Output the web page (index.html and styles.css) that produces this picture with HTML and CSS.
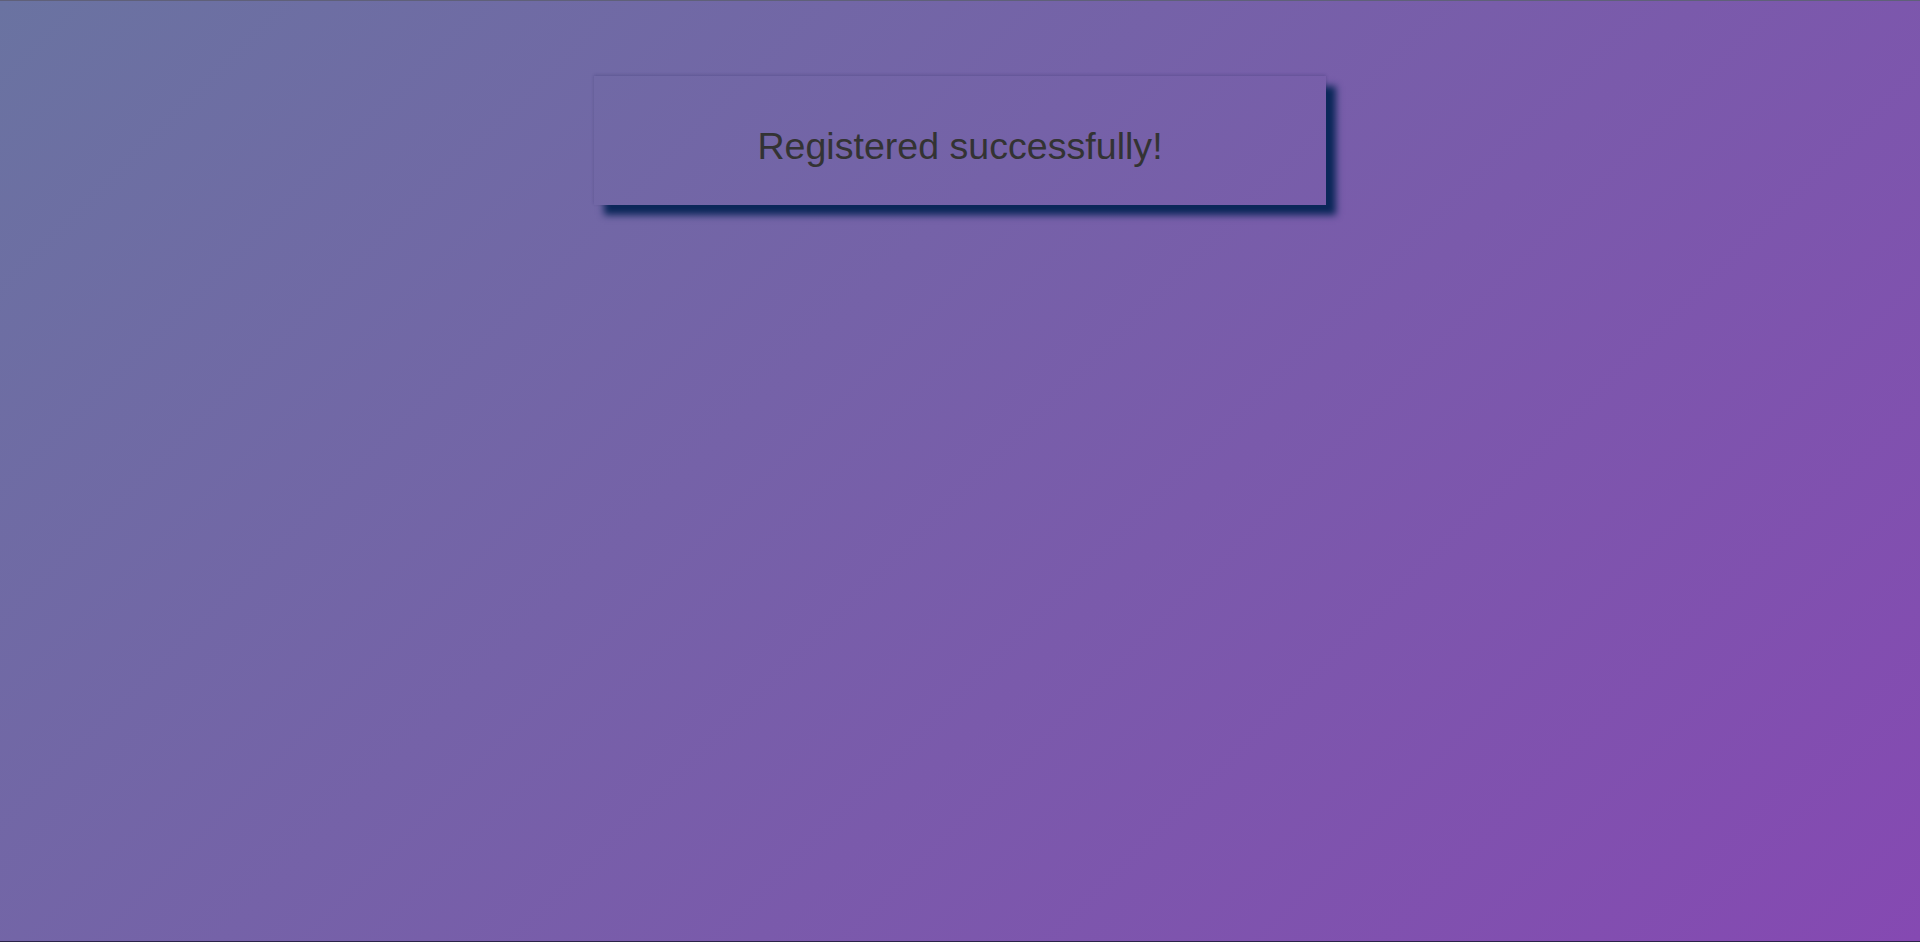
FILE: index.html
```html
<!DOCTYPE html>
<html lang="en">
<head>
<meta charset="utf-8">
<title>Registered</title>
<link rel="stylesheet" href="styles.css">
</head>
<body>
<main class="page">
  <div class="notice">
    <p class="notice-text">Registered successfully!</p>
  </div>
</main>
</body>
</html>
```
FILE: styles.css
```css
html, body {
  margin: 0;
  padding: 0;
  height: 100%;
}
body {
  font-family: "Liberation Sans", Arial, sans-serif;
  background: linear-gradient(135deg, #6a73a1 0%, #8549b2 100%);
  border-top: 1px solid #5f6079;
  border-bottom: 1px solid #2a2348;
  box-sizing: border-box;
  overflow: hidden;
}
.page {
  display: flex;
  justify-content: center;
  padding-top: 75px;
}
.notice {
  width: 732px;
  height: 129px;
  display: flex;
  align-items: center;
  justify-content: center;
  box-shadow: 10px 10px 7px #0b2759, 0 -1px 3px rgba(30, 30, 90, 0.25);
}
.notice-text {
  margin: 0;
  padding-top: 12px;
  font-size: 37.6px;
  color: #333;
}
```
